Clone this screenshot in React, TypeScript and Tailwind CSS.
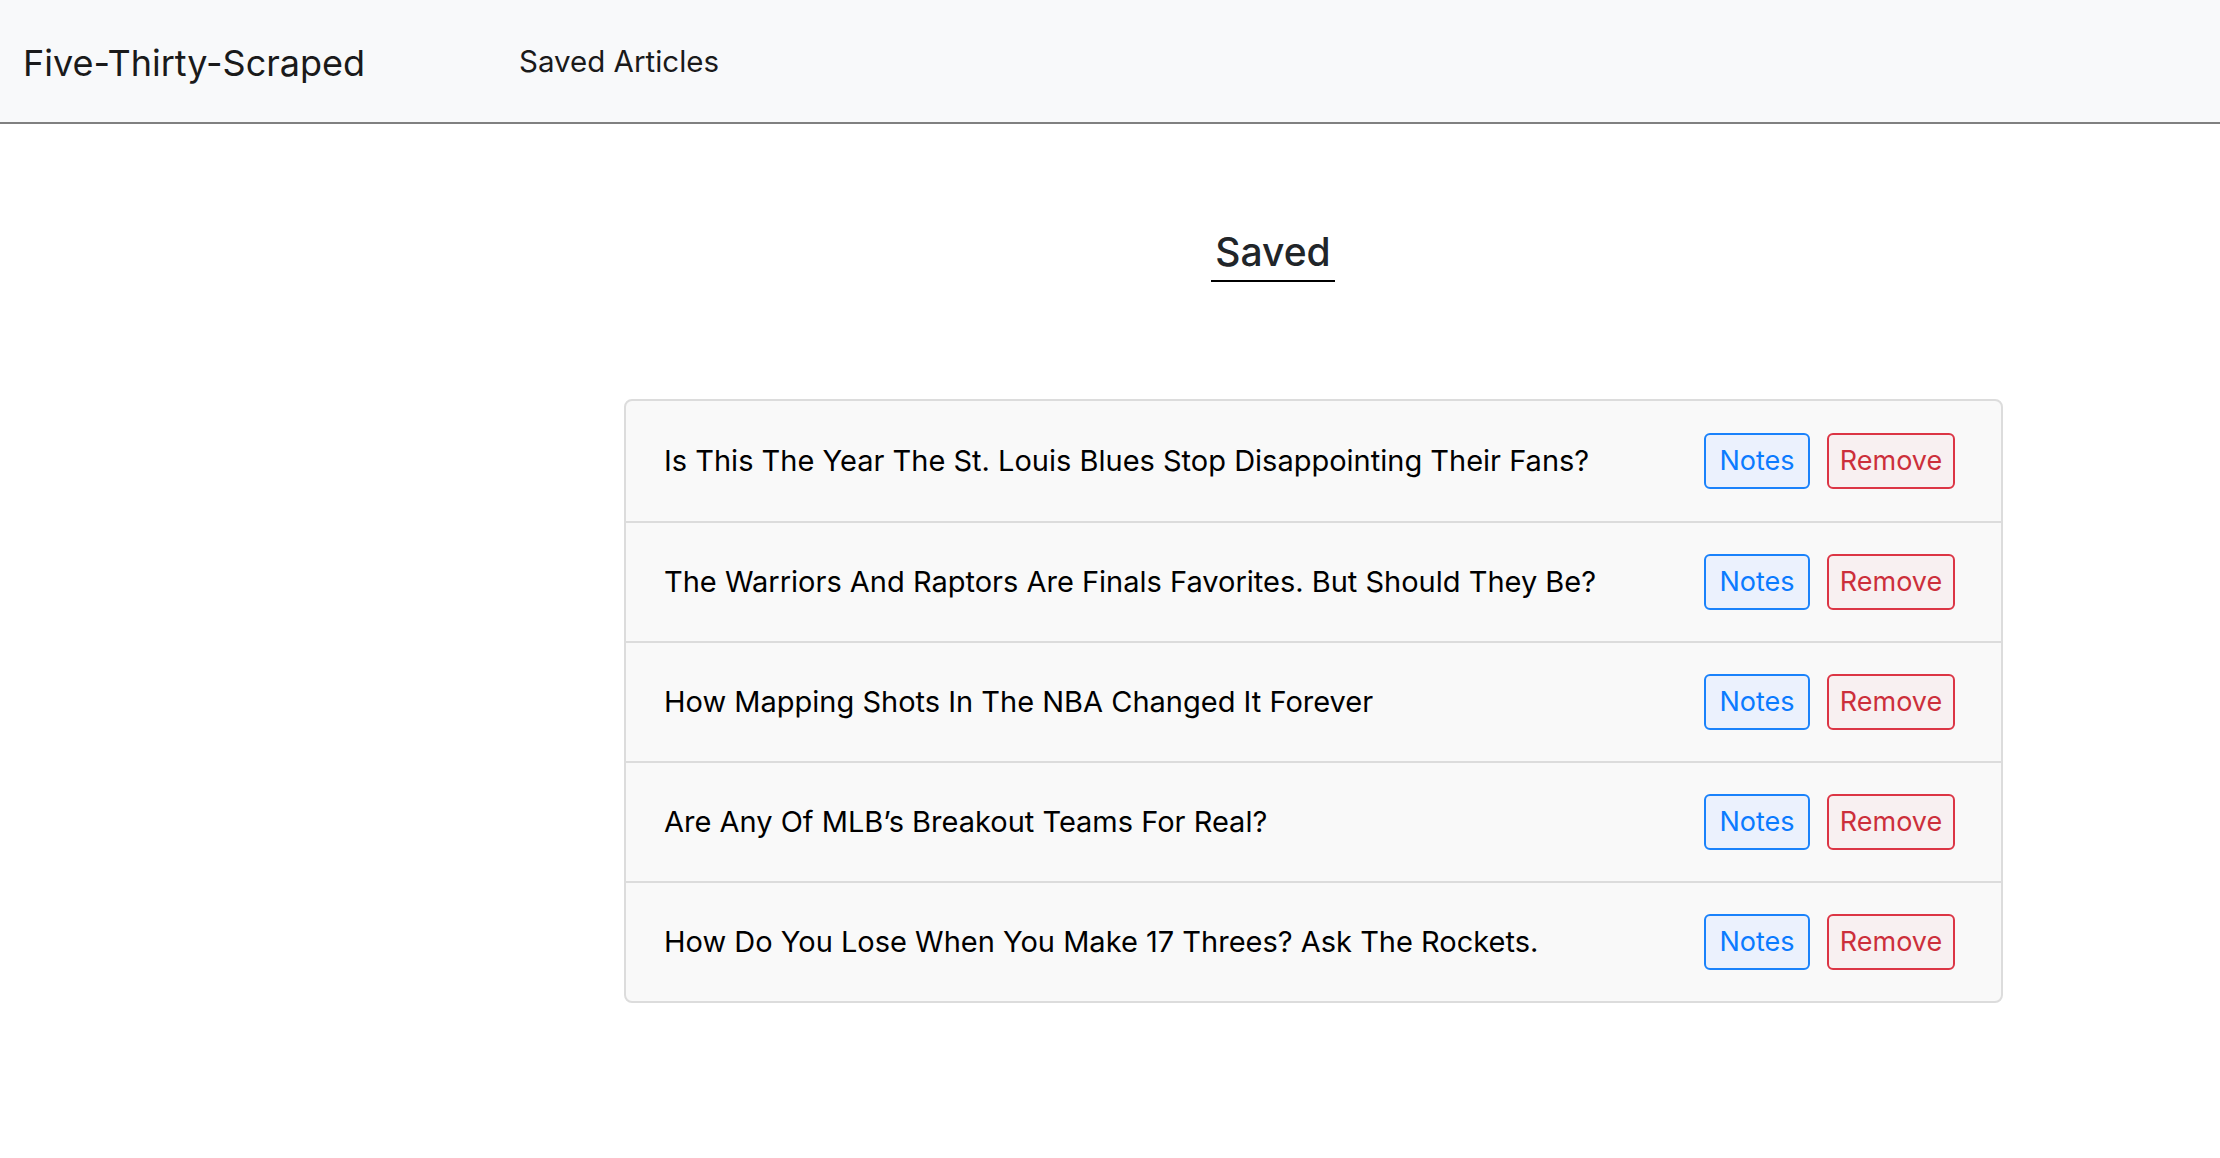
import React from "react";

const articles = [
  "Is This The Year The St. Louis Blues Stop Disappointing Their Fans?",
  "The Warriors And Raptors Are Finals Favorites. But Should They Be?",
  "How Mapping Shots In The NBA Changed It Forever",
  "Are Any Of MLB\u2019s Breakout Teams For Real?",
  "How Do You Lose When You Make 17 Threes? Ask The Rockets.",
];

export default function App() {
  return (
    <div
      className="min-h-screen w-full bg-white"
      style={{ fontFamily: "Inter, 'Noto Sans', sans-serif" }}
    >
      <nav className="flex h-[124px] items-center border-b-2 border-[#808080] bg-[#f8f9fa] pl-[23px]">
        <div className="mt-[6px] w-[496px] text-[36px] leading-[1.2] text-[#1a1a1a]">
          Five-Thirty-Scraped
        </div>
        <div className="mt-[1px] text-[29.5px] leading-[1.2] text-[#1a1a1a]">Saved Articles</div>
      </nav>

      <div className="flex justify-center pl-[326px] pt-[105px]">
        <h1 className="border-b-2 border-black px-[4px] pb-[4px] text-[39px] font-medium leading-[1.2] text-[#212529]">
          Saved
        </h1>
      </div>

      <div className="ml-[624px] mt-[117px] w-[1379px] overflow-hidden rounded-[8px] border-2 border-[#dcdcdc] bg-[#f9f9f9]">
        {articles.map((title, i) => (
          <div
            key={i}
            className={
              "flex h-[120px] items-center justify-between pl-[38px] pr-[46px] " +
              (i > 0 ? "border-t-2 border-[#dcdcdc]" : "")
            }
          >
            <span className="text-[29px] text-black">{title}</span>
            <div className="flex gap-[17px]">
              <button className="flex h-[56px] w-[106px] items-center justify-center rounded-[6px] border-2 border-[#1a82fb] bg-[#ebf1fd] text-[27px] text-[#0b7bff]">
                Notes
              </button>
              <button className="flex h-[56px] w-[128px] items-center justify-center rounded-[6px] border-2 border-[#dc3545] bg-[#f8f0f1] text-[27px] text-[#cc2f3b]">
                Remove
              </button>
            </div>
          </div>
        ))}
      </div>
    </div>
  );
}
